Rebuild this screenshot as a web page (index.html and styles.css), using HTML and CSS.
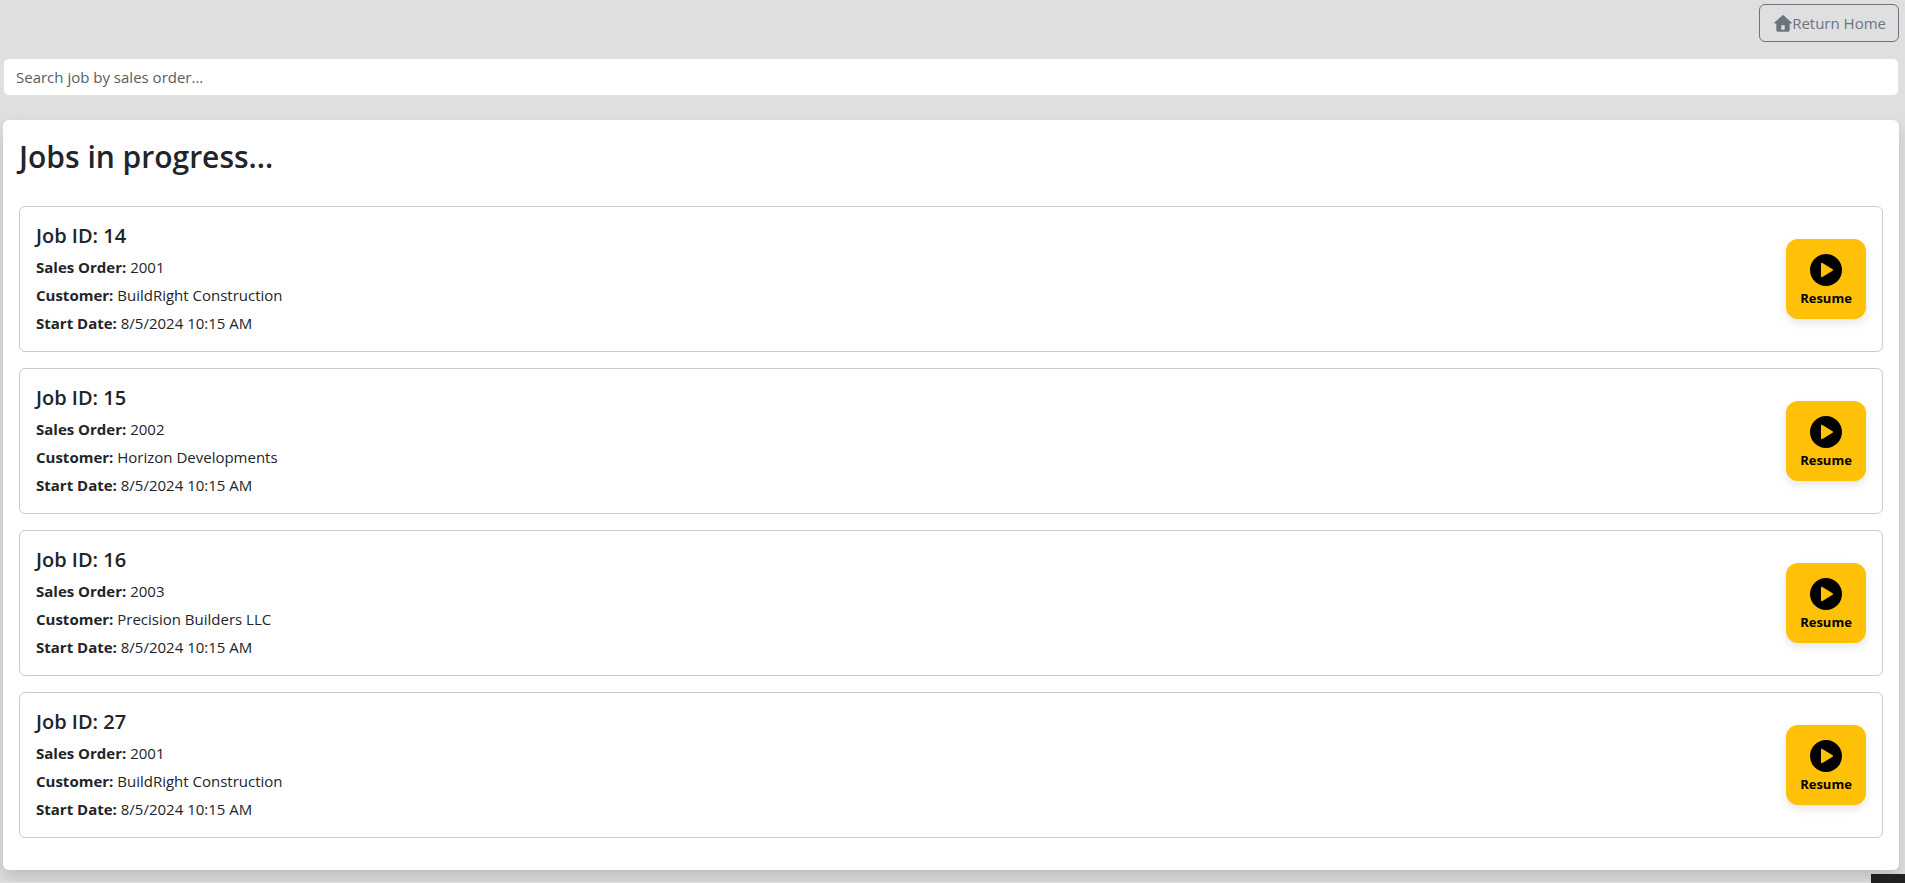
FILE: index.html
```
<!DOCTYPE html>
<html lang="en">
<head>
    <meta charset="utf-8" />
    <meta name="viewport" content="width=device-width, initial-scale=1" />
    <title>Jobs in progress</title>
    <link rel="stylesheet" href="styles.css">
</head>
<body>
    <svg class="iconDefs" aria-hidden="true">
        <symbol id="iconPlay" viewBox="0 0 16 16">
            <path fill-rule="evenodd" d="M16 8A8 8 0 1 1 0 8a8 8 0 0 1 16 0M6.2 4.500C5.900 4.300 5.500 4.500 5.500 4.900v6.200c0 .4.4.6.7.4l5.100-3.100a.5.5 0 0 0 0-.8z" />
        </symbol>
    </svg>

    <div class="page">
        <header class="topBar">
            <a class="homeButton" href="#">
                <svg class="homeIcon" viewBox="0 0 18 17" aria-hidden="true">
                    <path fill-rule="evenodd" d="M8.300.4a1 1 0 0 1 1.400 0L17.600 7.400a.7.7 0 0 1-.5 1.200H15.700V15a1.700 1.700 0 0 1-1.700 1.700H4A1.700 1.700 0 0 1 2.300 15V8.600H.9a.7.7 0 0 1-.5-1.200zM7.300 10.200v4.600h3.400v-4.600z" />
                </svg>
                <span>Return Home</span>
            </a>
        </header>

        <input class="searchBox" type="text" id="search" aria-label="Search job by sales order" placeholder="Search job by sales order...">

        <main class="jobsPanel">
            <h2 class="panelTitle">Jobs in progress...</h2>
            <ul class="jobList">
                <li class="jobItem">
                    <div class="jobInfo">
                        <h5 class="jobTitle">Job ID: 14</h5>
                        <p><strong>Sales Order:</strong> 2001</p>
                        <p><strong>Customer:</strong> BuildRight Construction</p>
                        <p><strong>Start Date:</strong> 8/5/2024 10:15 AM</p>
                    </div>
                    <button class="resumeButton" type="button">
                        <svg class="playIcon" aria-hidden="true"><use href="#iconPlay" /></svg>
                        <span>Resume</span>
                    </button>
                </li>
                <li class="jobItem">
                    <div class="jobInfo">
                        <h5 class="jobTitle">Job ID: 15</h5>
                        <p><strong>Sales Order:</strong> 2002</p>
                        <p><strong>Customer:</strong> Horizon Developments</p>
                        <p><strong>Start Date:</strong> 8/5/2024 10:15 AM</p>
                    </div>
                    <button class="resumeButton" type="button">
                        <svg class="playIcon" aria-hidden="true"><use href="#iconPlay" /></svg>
                        <span>Resume</span>
                    </button>
                </li>
                <li class="jobItem">
                    <div class="jobInfo">
                        <h5 class="jobTitle">Job ID: 16</h5>
                        <p><strong>Sales Order:</strong> 2003</p>
                        <p><strong>Customer:</strong> Precision Builders LLC</p>
                        <p><strong>Start Date:</strong> 8/5/2024 10:15 AM</p>
                    </div>
                    <button class="resumeButton" type="button">
                        <svg class="playIcon" aria-hidden="true"><use href="#iconPlay" /></svg>
                        <span>Resume</span>
                    </button>
                </li>
                <li class="jobItem">
                    <div class="jobInfo">
                        <h5 class="jobTitle">Job ID: 27</h5>
                        <p><strong>Sales Order:</strong> 2001</p>
                        <p><strong>Customer:</strong> BuildRight Construction</p>
                        <p><strong>Start Date:</strong> 8/5/2024 10:15 AM</p>
                    </div>
                    <button class="resumeButton" type="button">
                        <svg class="playIcon" aria-hidden="true"><use href="#iconPlay" /></svg>
                        <span>Resume</span>
                    </button>
                </li>
            </ul>
        </main>
    </div>

    <div class="cornerBadge"></div>
</body>
</html>
```
FILE: styles.css
```
* {
    box-sizing: border-box;
}

body {
    margin: 0;
    background-color: #dfdfdf;
    color: #212529;
    font-family: "Segoe UI", "Open Sans", "Noto Sans", sans-serif;
    font-size: 15px;
    line-height: 24px;
}

.iconDefs {
    display: none;
}

.page {
    padding: 4px 6px 12px 3px;
}

.topBar {
    display: flex;
    justify-content: flex-end;
    margin-bottom: 16px;
}

.homeButton {
    display: flex;
    align-items: center;
    padding: 6px 12px 6px 14px;
    border: 1px solid #6c757d;
    border-radius: 6px;
    color: #6c757d;
    text-decoration: none;
}

    .homeButton:hover {
        background-color: #6c757d;
        color: #fff;
    }

.homeIcon {
    width: 18px;
    height: 17px;
    fill: currentColor;
}

.searchBox {
    display: block;
    width: 100%;
    height: 38px;
    padding: 6px 12px;
    border: 1px solid #dee2e6;
    border-radius: 6px;
    background-color: #fff;
    color: #212529;
    font: inherit;
}

    .searchBox::placeholder {
        color: #595c5f;
        opacity: 1;
    }

.jobsPanel {
    margin-top: 24px;
    padding: 16px 16px 32px;
    border-radius: 6px;
    background-color: #fff;
    box-shadow: 0 8px 16px rgba(0, 0, 0, 0.15);
}

.panelTitle {
    margin: 0 0 28px;
    font-size: 30px;
    font-weight: 600;
    line-height: 42px;
}

.jobList {
    display: flex;
    flex-direction: column;
    gap: 16px;
    margin: 0;
    padding: 0;
    list-style: none;
}

.jobItem {
    display: flex;
    justify-content: space-between;
    align-items: center;
    padding: 16px;
    border: 1px solid #ccc;
    border-radius: 6px;
}

.jobTitle {
    margin: 0 0 6px;
    font-size: 20px;
    font-weight: 600;
    line-height: 26px;
}

.jobInfo p {
    margin: 0 0 4px;
}

    .jobInfo p:last-child {
        margin-bottom: 0;
    }

.jobInfo strong {
    font-weight: 700;
}

.resumeButton {
    display: flex;
    flex-direction: column;
    align-items: center;
    justify-content: center;
    width: 80px;
    height: 80px;
    padding: 4px 0 0;
    border: none;
    border-radius: 12px;
    background-color: #ffc107;
    box-shadow: 0 4px 8px rgba(0, 0, 0, 0.1);
    color: #000;
    font-family: inherit;
    font-size: 13px;
    font-weight: 700;
    line-height: 20px;
    cursor: pointer;
}

.playIcon {
    width: 32px;
    height: 32px;
    margin-bottom: 2px;
    fill: currentColor;
}

/* dark tab in the bottom right corner of the window */
.cornerBadge {
    position: fixed;
    right: 0;
    bottom: 0;
    width: 34px;
    height: 9px;
    background-color: #212121;
}
```
